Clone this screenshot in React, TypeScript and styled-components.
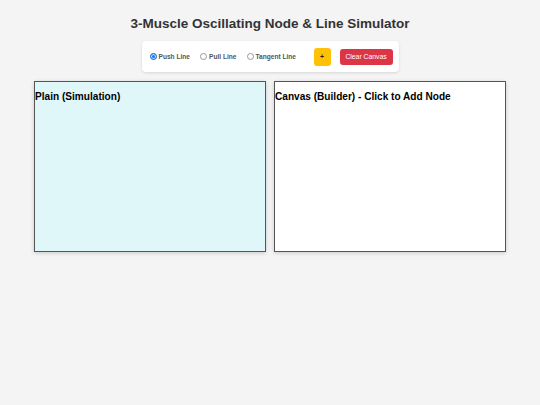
import styled, { createGlobalStyle } from "styled-components";

const GlobalStyle = createGlobalStyle`
  html, body {
    margin: 0;
    padding: 0;
    background: #f4f4f4;
    font-family: "Liberation Sans", Arial, sans-serif;
  }
`;

const Page = styled.div`
  width: 540px;
  height: 405px;
  display: flex;
  flex-direction: column;
  align-items: center;
`;

const Title = styled.h1`
  margin: 15px 0 0;
  font-size: 13.5px;
  line-height: 18px;
  font-weight: 700;
  color: #333;
`;

const Controls = styled.div`
  margin-top: 8px;
  width: 257px;
  height: 31px;
  box-sizing: border-box;
  background: #fff;
  border-radius: 4px;
  box-shadow: 0 1px 3px rgba(0, 0, 0, 0.12);
  display: flex;
  align-items: center;
  padding: 0 6px 0 8px;
`;

const RadioLabel = styled.label`
  display: flex;
  align-items: center;
  gap: 2px;
  font-size: 6.6px;
  font-weight: 700;
  color: #555;
  margin-right: 10px;
`;

const RadioDot = styled.span<{ checked?: boolean }>`
  width: 5px;
  height: 5px;
  border-radius: 50%;
  border: 1px solid ${(p) => (p.checked ? "#1a73e8" : "#999")};
  background: ${(p) => (p.checked ? "#1a73e8" : "#fff")};
  box-shadow: ${(p) => (p.checked ? "inset 0 0 0 1px #cfe0fb" : "none")};
`;

const Spacer = styled.div`
  flex: 1;
`;

const Button = styled.button<{ variant: "warn" | "danger" }>`
  border: none;
  border-radius: 3px;
  font-family: inherit;
  font-size: 6.8px;
  cursor: pointer;
  height: ${(p) => (p.variant === "warn" ? "18px" : "16px")};
  width: ${(p) => (p.variant === "warn" ? "17px" : "53px")};
  padding: 0;
  background: ${(p) => (p.variant === "warn" ? "#ffc107" : "#dc3545")};
  color: ${(p) => (p.variant === "warn" ? "#222" : "#fff")};
  font-weight: ${(p) => (p.variant === "warn" ? 700 : 400)};
  margin-left: ${(p) => (p.variant === "danger" ? "9px" : "0")};
`;

const Panels = styled.div`
  margin-top: 9px;
  display: flex;
  gap: 8px;
`;

const Panel = styled.div<{ tint?: boolean }>`
  width: 232px;
  height: 171px;
  box-sizing: border-box;
  border: 1px solid #555;
  background: ${(p) => (p.tint ? "#e0f7fa" : "#fff")};
  box-shadow: 0 1px 4px rgba(0, 0, 0, 0.18);
`;

const PanelLabel = styled.div`
  padding-top: 9px;
  font-size: 10.1px;
  font-weight: 700;
  color: #000;
`;

export default function App() {
  return (
    <>
      <GlobalStyle />
      <Page>
        <Title>3-Muscle Oscillating Node &amp; Line Simulator</Title>
        <Controls>
          <RadioLabel>
            <RadioDot checked />
            Push Line
          </RadioLabel>
          <RadioLabel>
            <RadioDot />
            Pull Line
          </RadioLabel>
          <RadioLabel>
            <RadioDot />
            Tangent Line
          </RadioLabel>
          <Spacer />
          <Button variant="warn">+</Button>
          <Button variant="danger">Clear Canvas</Button>
        </Controls>
        <Panels>
          <Panel tint>
            <PanelLabel>Plain (Simulation)</PanelLabel>
          </Panel>
          <Panel>
            <PanelLabel>Canvas (Builder) - Click to Add Node</PanelLabel>
          </Panel>
        </Panels>
      </Page>
    </>
  );
}
